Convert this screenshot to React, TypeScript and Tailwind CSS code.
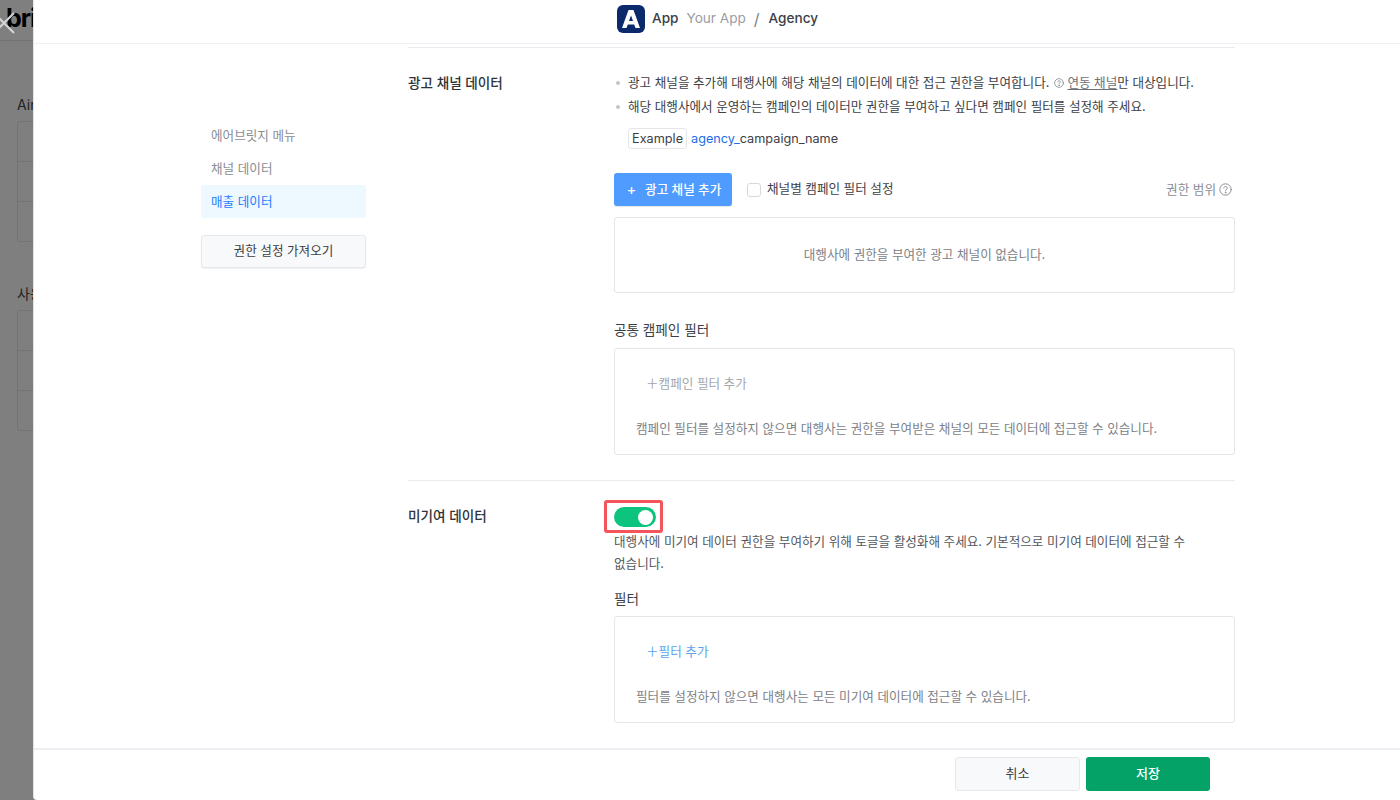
const KR = "font-['Inter','Noto_Sans_CJK_KR',sans-serif]";

const Help = ({ size = 12 }: { size?: number }) => (
  <svg width={size} height={size} viewBox="0 0 16 16" fill="none" stroke="currentColor" strokeWidth="1.2" strokeLinecap="round" className="inline-block shrink-0">
    <circle cx="8" cy="8" r="7" />
    <path d="M5.9 6.3a2.1 2.1 0 1 1 3.3 1.7c-.7.5-1.2.9-1.2 1.8" />
    <circle cx="8" cy="12" r=".4" fill="currentColor" />
  </svg>
);

const Backdrop = () => (
  <div className="relative h-full w-[33px] shrink-0 overflow-hidden bg-[#7f7f7f]">
    <div className="w-[300px]">
      <div className="h-[41px] border-b border-[#737373] pl-[6px] pt-[1px] text-[25px] font-bold leading-[34px] tracking-[-1px] text-black">bri</div>
      <div className="pl-[17px] pt-[54px] text-[14px] leading-[20px] text-[#222]">Airbridge</div>
      <div className="ml-[17px] mt-[6px] rounded-[3px] border border-[#737373]">
        <div className="h-[40px] border-b border-[#737373]" />
        <div className="h-[40px] border-b border-[#737373]" />
        <div className="h-[39px]" />
      </div>
      <div className="pl-[17px] pt-[42px] text-[14px] leading-[20px] text-[#222]">사용자</div>
      <div className="ml-[17px] mt-[6px] rounded-[3px] border border-[#737373]">
        <div className="h-[40px] border-b border-[#737373]" />
        <div className="h-[40px] border-b border-[#737373]" />
        <div className="h-[39px]" />
      </div>
    </div>
    <svg width="15" height="22" viewBox="0 0 15 22" className="absolute left-0 top-[12px]" stroke="#d4d4d4" strokeWidth="2.2">
      <path d="M14 1 L-6 21 M-6 1 L14 21" />
    </svg>
  </div>
);

const Sidebar = () => (
  <aside className="flex w-[165px] shrink-0 flex-col pt-[75px] text-[12.6px]">
    <div className="flex h-[33px] items-center px-[10px] pt-[1px] text-[#8a8d93]">에어브릿지 메뉴</div>
    <div className="flex h-[33px] items-center px-[10px] pt-[1px] text-[#8a8d93]">채널 데이터</div>
    <div className="flex h-[33px] items-center rounded-[3px] bg-[#eef9ff] px-[10px] pt-[1px] text-[#1a7cff]">매출 데이터</div>
    <button className="mt-[17px] h-[33px] rounded-[3px] border border-[#e6e8ec] bg-[#f8f9fb] text-center text-[#3c4046] shadow-[0_1px_1px_rgba(0,0,0,0.06)]">
      권한 설정 가져오기
    </button>
  </aside>
);

const FilterBox = ({ action, note, active }: { action: string; note: string; active?: boolean }) => (
  <div className="h-[107px] rounded-[3px] border border-[#e4e6ea] px-[21px] pt-[26px] text-[12.6px] leading-[18px]">
    <div className={active ? "pl-[10px] text-[#5ba4ee]" : "pl-[10px] text-[#a4a7ac]"}>＋{action}</div>
    <p className="mt-[27px] text-[#7d8187]">{note}</p>
  </div>
);

const Section1 = () => (
  <section className="flex h-[433px] border-b border-[#e9ebee] pt-[26px]">
    <h3 className="w-[206px] shrink-0 text-[13.6px] font-medium leading-[19px] text-[#2f3338]">광고 채널 데이터</h3>
    <div className="w-[621px]">
      <ul className="flex flex-col gap-[6px] text-[12.6px] leading-[18px] text-[#3c4046]">
        <li className="flex items-center gap-[8px] pl-[2px]">
          <span className="h-[4px] w-[4px] rounded-full bg-[#c2c5ca]" />
          <span className="flex items-center">
            광고 채널을 추가해 대행사에 해당 채널의 데이터에 대한 접근 권한을 부여합니다.
            <span className="ml-[5px] mr-[3px] flex text-[#7d8187]"><Help size={10} /></span>
            <span className="text-[#6d7177] underline underline-offset-2">연동 채널</span>만 대상입니다.
          </span>
        </li>
        <li className="flex items-center gap-[8px] pl-[2px]">
          <span className="h-[4px] w-[4px] rounded-full bg-[#c2c5ca]" />
          해당 대행사에서 운영하는 캠페인의 데이터만 권한을 부여하고 싶다면 캠페인 필터를 설정해 주세요.
        </li>
      </ul>
      <div className="mt-[12px] flex items-center pl-[14px] text-[12.7px] text-[#3c4046]">
        <span className="flex h-[21px] items-center rounded-[3px] border border-[#e4e6ea] px-[3px]">Example</span>
        <span className="ml-[4px] text-[#1a6fe8]">agency_</span>
        <span>campaign_name</span>
      </div>
      <div className="mt-[24px] flex items-center">
        <button className="flex h-[33px] w-[118px] items-center justify-center gap-[9px] rounded-[3px] bg-[#4f9bff] pl-[2px] pt-[1px] text-[12.6px] font-medium text-white shadow-[0_1px_1px_rgba(0,0,0,0.1)]">
          <span className="text-[14px] leading-none">+</span>광고 채널 추가
        </button>
        <span className="ml-[15px] h-[14px] w-[14px] rounded-[3px] border border-[#d5d8dd] bg-white" />
        <span className="ml-[6px] text-[12.6px] text-[#3c4046]">채널별 캠페인 필터 설정</span>
        <span className="ml-auto flex items-center gap-[3px] pr-[3px] pt-[1px] text-[12.6px] text-[#8a8d93]">권한 범위 <Help size={13} /></span>
      </div>
      <div className="mt-[11px] flex h-[76px] items-center justify-center rounded-[3px] border border-[#e4e6ea] pt-[1px] text-[12.6px] text-[#7d8187]">
        대행사에 권한을 부여한 광고 채널이 없습니다.
      </div>
      <h4 className="mb-[8px] mt-[28px] text-[13.6px] leading-[19px] text-[#3c4046]">공통 캠페인 필터</h4>
      <FilterBox action="캠페인 필터 추가" note="캠페인 필터를 설정하지 않으면 대행사는 권한을 부여받은 채널의 모든 데이터에 접근할 수 있습니다." />
    </div>
  </section>
);

const Section2 = () => (
  <section className="flex pt-[26px]">
    <h3 className="w-[206px] shrink-0 text-[13.6px] font-medium leading-[19px] text-[#2f3338]">미기여 데이터</h3>
    <div className="relative w-[621px]">
      <div className="absolute left-[-10px] top-[-7px] h-[33px] w-[59px] rounded-[3px] border-[3px] border-[#f4545c]" />
      <div className="flex h-[20px] w-[42px] items-center justify-end rounded-full bg-[#0cc47e] pr-[3px]">
        <span className="h-[15px] w-[15px] rounded-full bg-white" />
      </div>
      <p className="mt-[4px] w-[590px] break-keep text-[12.6px] leading-[22px] text-[#53575d]">
        대행사에 미기여 데이터 권한을 부여하기 위해 토글을 활성화해 주세요. 기본적으로 미기여 데이터에 접근할 수 없습니다.
      </p>
      <h4 className="mb-[7px] mt-[15px] text-[13.6px] leading-[19px] text-[#3c4046]">필터</h4>
      <FilterBox active action="필터 추가" note="필터를 설정하지 않으면 대행사는 모든 미기여 데이터에 접근할 수 있습니다." />
    </div>
  </section>
);

export default function App() {
  return (
    <div className={`flex h-[800px] w-[1400px] overflow-hidden bg-[#7f7f7f] ${KR}`}>
      <Backdrop />
      <div className="flex h-full flex-1 flex-col rounded-bl-[4px] border-l border-[#dfe5ee] bg-white">
        <header className="flex h-[44px] shrink-0 items-center border-b border-[#eff1f4] pb-[6px] pl-[583px] text-[13.6px]">
          <svg width="28" height="28" viewBox="0 0 28 28" className="mr-[7px]">
            <rect width="28" height="28" rx="6" fill="#0b2a6b" />
            <path d="M11.5 5 H16.5 L23 23 H18.5 L17.2 19.5 H10.8 L9.5 23 H5 Z" fill="#fff" />
            <path d="M14 10.5 L12 16 H16 Z" fill="#0b2a6b" />
          </svg>
          <span className="font-medium text-[#3c4046]">App</span>
          <span className="ml-[8px] text-[#9a9da2]">Your App</span>
          <span className="ml-[8px] text-[16px] text-[#7d8187]">/</span>
          <span className="ml-[9px] font-medium text-[#3c4046]">Agency</span>
        </header>
        <main className="flex min-h-0 flex-1 overflow-hidden pl-[167px]">
          <Sidebar />
          <div className="ml-[42px] w-[827px]">
            <div className="mt-[3px] border-t border-[#e9ebee]">
              <Section1 />
              <Section2 />
            </div>
          </div>
        </main>
        <footer className="flex h-[52px] shrink-0 items-center border-t-2 border-[#eceef1] pb-[2px] pl-[921px] text-[13px]">
          <button className="h-[34px] w-[125px] rounded-[3px] border border-[#e6e8ec] bg-[#f8f9fb] text-[#3c4046]">취소</button>
          <button className="ml-[6px] h-[34px] w-[124px] rounded-[3px] bg-[#05a268] font-medium text-white">저장</button>
        </footer>
      </div>
    </div>
  );
}
